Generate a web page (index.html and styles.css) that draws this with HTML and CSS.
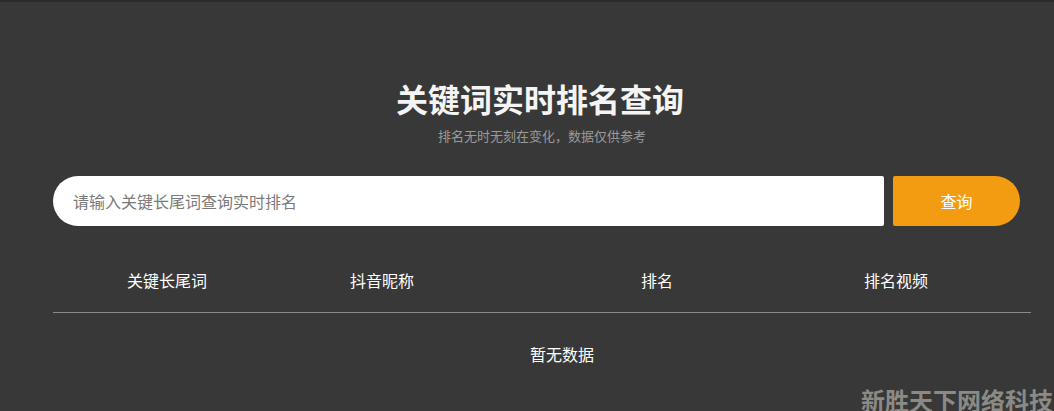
FILE: index.html
```html
<!DOCTYPE html>
<html lang="zh-CN">
<head>
  <meta charset="UTF-8" />
  <title>关键词实时排名查询</title>
  <meta name="viewport" content="width=device-width, initial-scale=1.0" />
  <link rel="stylesheet" href="styles.css">
</head>
<body>
  <div class="topbar"></div>
  <div id="page">
    <h1 class="title">关键词实时排名查询</h1>
    <p class="subtitle">排名无时无刻在变化，数据仅供参考</p>

    <form class="search" onsubmit="return false">
      <input type="text" class="search-input" placeholder="请输入关键长尾词查询实时排名">
      <button type="submit" class="search-btn">查询</button>
    </form>

    <div class="rank-table">
      <div class="rank-head">
        <div>关键长尾词</div>
        <div>抖音昵称</div>
        <div>排名</div>
        <div>排名视频</div>
      </div>
      <div class="rank-empty">暂无数据</div>
    </div>
  </div>
  <div class="watermark">新胜天下网络科技</div>
</body>
</html>
```

FILE: styles.css
```css
body {
  margin: 0;
  background: #383838;
  color: #fff;
  font-family: "Microsoft YaHei", "Noto Sans CJK SC", sans-serif;
  overflow: hidden;
  height: 411px;
  position: relative;
}

.topbar {
  height: 2px;
  background: #2b2b2b;
}

#page {
  padding: 0 23px 0 53px;
}

.title {
  margin: 76px 0 0;
  text-align: center;
  font-size: 32px;
  line-height: 40px;
  font-weight: bold;
  color: #f4f4f4;
  padding-right: 4px;
}

.subtitle {
  margin: 9px 0 0;
  text-align: center;
  font-size: 13px;
  line-height: 18px;
  color: #9a9a9a;
}

.search {
  display: flex;
  gap: 9px;
  margin-top: 31px;
  width: 967px;
}

.search-input {
  flex: 1;
  height: 50px;
  box-sizing: border-box;
  border: none;
  outline: none;
  border-radius: 25px 2px 2px 25px;
  padding: 0 20px;
  font-family: inherit;
  font-size: 16px;
  color: #333;
  background: #fff;
}

.search-input::placeholder {
  color: #7a7a7a;
}

.search-btn {
  width: 127px;
  height: 50px;
  border: none;
  border-radius: 2px 25px 25px 2px;
  background: #f39c12;
  color: #fff;
  font-family: inherit;
  font-size: 16px;
  cursor: pointer;
}

.rank-table {
  margin-top: 34px;
  width: 978px;
}

.rank-head {
  display: grid;
  grid-template-columns: 228px 202px 348px 130px 1fr;
  border-bottom: 1px solid #8a8a8a;
  padding: 10px 0 22px;
  font-size: 16px;
  line-height: 20px;
  text-align: center;
}

.rank-empty {
  padding: 31px 0 0 455px;
  width: 108px;
  text-align: center;
  font-size: 16px;
  line-height: 20px;
}

.watermark {
  position: absolute;
  right: 1px;
  bottom: -6px;
  font-size: 24px;
  font-weight: bold;
  color: #8a8a86;
}
```
